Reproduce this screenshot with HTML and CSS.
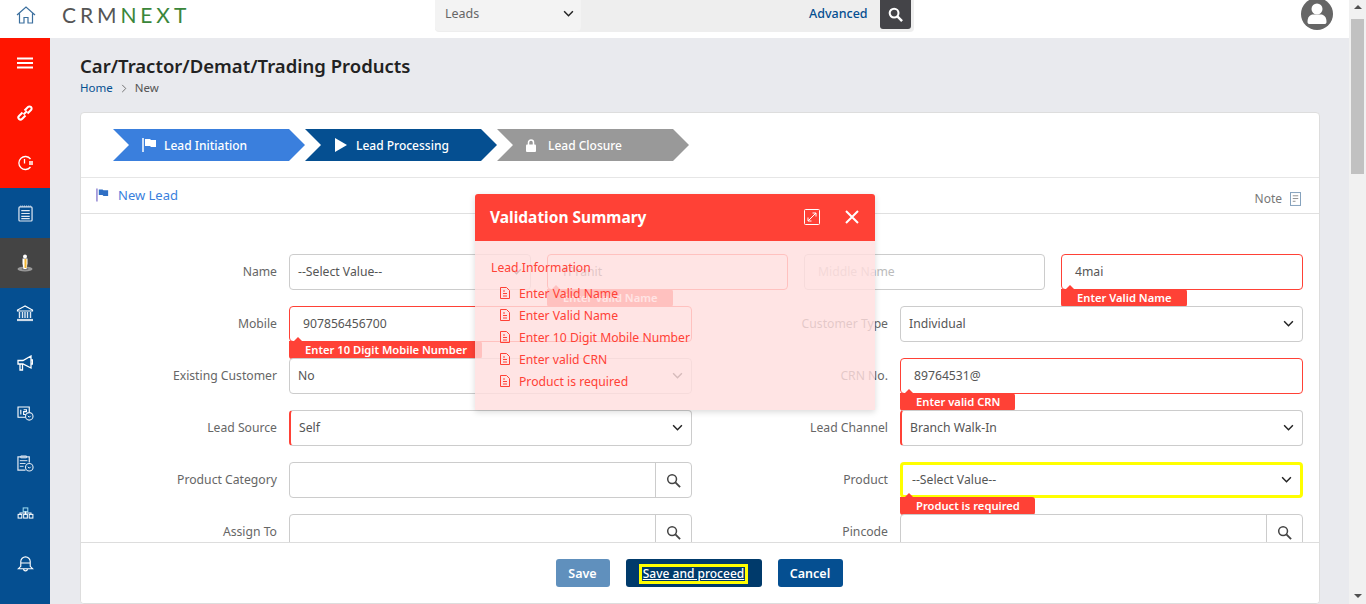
FILE: index.html
```html
<!DOCTYPE html>
<html lang="en">
<head>
<meta charset="utf-8">
<title>Car/Tractor/Demat/Trading Products</title>
<link rel="stylesheet" href="styles.css">
</head>
<body>
<div class="page">
  <div class="app">
    <header class="topbar">
      <svg class="home-icon" viewBox="0 0 20 18" width="20" height="18"><path d="M1 9 10 1l9 8M3.500 7.500V17h4.500v-5.500h4V17h4.500V7.500" fill="none" stroke="#3b6f9e" stroke-width="1.200"/></svg>
      <div class="logo"><span class="logo-a">CRM</span><span class="logo-b">NEXT</span></div>
      <div class="search">
        <div class="search-type"><span>Leads</span><svg class="chev" viewBox="0 0 12 8" width="11" height="7"><path d="M1 1.500 6 6.500l5-5" fill="none" stroke="#222" stroke-width="1.700"/></svg></div>
        <a class="advanced">Advanced</a>
        <div class="search-btn"><svg viewBox="0 0 16 16" width="15" height="15"><circle cx="6.500" cy="6.500" r="4.700" fill="none" stroke="#fff" stroke-width="2.200"/><path d="m10 10 5 5" stroke="#fff" stroke-width="2.600"/></svg></div>
      </div>
      <svg class="avatar" viewBox="0 0 32 32" width="32" height="32"><circle cx="16" cy="16" r="16" fill="#666"/><circle cx="16" cy="11" r="5.500" fill="#fff"/><path d="M6.500 24c0-5.500 3-7.500 5.500-7.500h8c2.500 0 5.500 2 5.500 7.500 0 1.500-1 2-2 2h-15c-1 0-2-.5-2-2z" fill="#fff"/></svg>
    </header>
    <div class="main">
      <nav class="sidebar">
        <div class="side-group red">
          <div class="side-item"><svg viewBox="0 0 16 12" width="16" height="12"><path d="M0 1.500h16M0 6h16M0 10.500h16" stroke="#fff" stroke-width="2"/></svg></div>
          <div class="side-item"><svg viewBox="0 0 18 18" width="18" height="18"><g fill="none" stroke="#fff" stroke-width="2"><path d="M7.500 10.500 11 7"/><path d="m6.500 8.500-3.500 3.500a2.100 2.100 0 0 0 3 3l3.500-3.500"/><path d="m8.500 6.500 3.500-3.500a2.100 2.100 0 0 1 3 3l-3.500 3.500"/></g></svg></div>
          <div class="side-item"><svg viewBox="0 0 18 18" width="18" height="18"><g fill="none" stroke="#fff" stroke-width="1.300"><path d="M14.500 13a6.500 6.500 0 1 1 0-8"/><path d="M8.500 5v4.500"/></g><rect x="13" y="7" width="4" height="4" fill="#ffc9c0"/></svg></div>
        </div>
        <div class="side-item"><svg viewBox="0 0 16 18" width="15" height="17"><rect x="1" y="2" width="14" height="15" rx="1" fill="none" stroke="#dfe8f2" stroke-width="1.300"/><path d="M3.500 6h9M3.500 9h9M3.500 12h9M3.500 14.500h9" stroke="#dfe8f2" stroke-width="1.300"/><path d="M2.500 1h11" stroke="#dfe8f2" stroke-dasharray="1 1"/></svg></div>
        <div class="side-item active"><svg viewBox="0 0 16 18" width="16" height="18"><ellipse cx="8" cy="15" rx="7.500" ry="2.500" fill="#999"/><ellipse cx="8" cy="15" rx="3.500" ry="1.200" fill="#777"/><circle cx="8" cy="2.500" r="2" fill="#fff"/><path d="M5.500 4.500h5v5l-1 5.500h-3l-1-5.500z" fill="#fff"/><rect x="7.500" y="5" width="2" height="9" fill="#f2b632"/></svg></div>
        <div class="side-item"><svg viewBox="0 0 18 17" width="18" height="17"><path d="M9 1 1.500 5v1h15V5z" fill="none" stroke="#fff" stroke-width="1.200"/><path d="M3.500 7v6M6.500 7v6M9 7v6M11.500 7v6M14.500 7v6" stroke="#dfe8f2" stroke-width="1.400"/><path d="M1 15h16" stroke="#cfdbe8" stroke-width="2.200"/></svg></div>
        <div class="side-item"><svg viewBox="0 0 16 16" width="16" height="16"><path d="M1 5.500h5L14 1v12L6 9H1zM3 9v6h2.500V9M14 5h1.500v4H14" fill="none" stroke="#fff" stroke-width="1.300"/></svg></div>
        <div class="side-item"><svg viewBox="0 0 18 16" width="17" height="15"><path d="M10 12H1V1h12v6" fill="none" stroke="#fff" stroke-width="1.200"/><path d="M4 4v5M7 4h3v2H7v3h3" fill="none" stroke="#fff" stroke-width="1.200"/><circle cx="13" cy="11" r="4" fill="#054f91" stroke="#dfe8f2" stroke-width="1.200"/><path d="m11.500 10.500 1.500 1.500 1.500-1.500" fill="none" stroke="#fff"/></svg></div>
        <div class="side-item"><svg viewBox="0 0 18 18" width="17" height="17"><path d="M9 16H1V2h12v6" fill="none" stroke="#dfe8f2" stroke-width="1.300"/><path d="M4 1h6v2H4zM3 6h8M3 9h6M3 12h4" fill="none" stroke="#dfe8f2"/><circle cx="13" cy="13" r="4" fill="#054f91" stroke="#dfe8f2" stroke-width="1.200"/><path d="m11.500 12.500 1.500 1.500 1.500-1.500" fill="none" stroke="#fff"/></svg></div>
        <div class="side-item"><svg viewBox="0 0 18 13" width="17" height="12"><g fill="none" stroke="#fff" stroke-width="1.100"><rect x="6.500" y="1" width="5" height="4" stroke="#9fdcf2"/><rect x="1" y="8" width="4" height="4"/><rect x="7" y="8" width="4" height="4"/><rect x="13" y="8" width="4" height="4"/><path d="M9 5v3M3 8V6.500h12V8"/></g></svg></div>
        <div class="side-item"><svg viewBox="0 0 18 18" width="17" height="17"><path d="M4 12V7a5 5 0 0 1 10 0v5l2.500 2.500h-15zM4.500 8.500h9M7 14.500c0 3 4 3 4 0" fill="none" stroke="#fff" stroke-width="1.200"/></svg></div>
      </nav>
      <main class="content">
        <h1 class="title">Car/Tractor/Demat/Trading Products</h1>
        <div class="crumbs"><a>Home</a><svg viewBox="0 0 6 10" width="6" height="9"><path d="m1 1 4 4-4 4" fill="none" stroke="#666"/></svg><span>New</span></div>
        <section class="panel">
          <div class="steps">
            <div class="step s1"><svg viewBox="0 0 15 14" width="15" height="14"><path d="M1 0v14" stroke="#fff" stroke-width="1.500"/><path d="M3 1h5l1 1h5v7H9L8 8H3z" fill="#fff"/></svg><span>Lead Initiation</span></div>
            <div class="step s2"><svg viewBox="0 0 12 14" width="12" height="14"><path d="M0 0l12 7-12 7z" fill="#fff"/></svg><span>Lead Processing</span></div>
            <div class="step s3"><svg viewBox="0 0 10 13" width="10" height="13"><path d="M2.500 6V3.500a2.500 2.500 0 0 1 5 0V6" fill="none" stroke="#fff" stroke-width="1.500"/><rect y="5.500" width="10" height="7.500" rx="1" fill="#fff"/></svg><span>Lead Closure</span></div>
          </div>
          <div class="panel-head">
            <div class="new-lead"><svg viewBox="0 0 15 14" width="14" height="14"><path d="M1 0v14" stroke="#8c7fd0" stroke-width="1.500"/><path d="M3 1h4l1 1h5v6H8L7 7H3z" fill="#2f6fc4"/></svg><span>New Lead</span></div>
            <div class="note"><span>Note</span><svg viewBox="0 0 12 15" width="11" height="14"><rect x=".5" y=".5" width="11" height="14" fill="none" stroke="#7b9ab8"/><path d="M3 4h6M3 7h6M3 10h3" stroke="#888"/></svg></div>
          </div>
          <div class="form-area">
            <form class="form-grid">
              <label class="lbl">Name</label>
              <div class="name-group">
                <div class="field sel"><span>--Select Value--</span><svg class="chev" viewBox="0 0 12 8" width="11" height="7"><path d="M1 1.500 6 6.500l5-5" fill="none" stroke="#222" stroke-width="1.700"/></svg></div>
                <div class="field err pad"><span>1Pranit</span><div class="tag">Enter Valid Name</div></div>
                <div class="field pad"><span class="ph">Middle Name</span></div>
                <div class="field err pad"><span>4mai</span><div class="tag">Enter Valid Name</div></div>
              </div>

              <label class="lbl">Mobile</label>
              <div class="field err pad"><span>907856456700</span><div class="tag wide">Enter 10 Digit Mobile Number</div></div>
              <label class="lbl">Customer Type</label>
              <div class="field sel"><span>Individual</span><svg class="chev" viewBox="0 0 12 8" width="11" height="7"><path d="M1 1.500 6 6.500l5-5" fill="none" stroke="#222" stroke-width="1.700"/></svg></div>

              <label class="lbl">Existing Customer</label>
              <div class="field sel"><span>No</span><svg class="chev" viewBox="0 0 12 8" width="11" height="7"><path d="M1 1.500 6 6.500l5-5" fill="none" stroke="#222" stroke-width="1.700"/></svg></div>
              <label class="lbl">CRN No.</label>
              <div class="field err pad"><span>89764531@</span><div class="tag">Enter valid CRN</div></div>

              <label class="lbl">Lead Source</label>
              <div class="field sel req"><span>Self</span><svg class="chev" viewBox="0 0 12 8" width="11" height="7"><path d="M1 1.500 6 6.500l5-5" fill="none" stroke="#222" stroke-width="1.700"/></svg></div>
              <label class="lbl">Lead Channel</label>
              <div class="field sel req"><span>Branch Walk-In</span><svg class="chev" viewBox="0 0 12 8" width="11" height="7"><path d="M1 1.500 6 6.500l5-5" fill="none" stroke="#222" stroke-width="1.700"/></svg></div>

              <label class="lbl">Product Category</label>
              <div class="field lookup"><div class="look-btn"><svg viewBox="0 0 16 16" width="15" height="15"><circle cx="6.500" cy="6.500" r="4.700" fill="none" stroke="#444" stroke-width="1.600"/><path d="m10 10 5 5" stroke="#444" stroke-width="2"/></svg></div></div>
              <label class="lbl">Product</label>
              <div class="field sel focus"><span>--Select Value--</span><svg class="chev" viewBox="0 0 12 8" width="11" height="7"><path d="M1 1.500 6 6.500l5-5" fill="none" stroke="#222" stroke-width="1.700"/></svg><div class="tag">Product is required</div></div>

              <label class="lbl">Assign To</label>
              <div class="field lookup"><div class="look-btn"><svg viewBox="0 0 16 16" width="15" height="15"><circle cx="6.500" cy="6.500" r="4.700" fill="none" stroke="#444" stroke-width="1.600"/><path d="m10 10 5 5" stroke="#444" stroke-width="2"/></svg></div></div>
              <label class="lbl">Pincode</label>
              <div class="field lookup"><div class="look-btn"><svg viewBox="0 0 16 16" width="15" height="15"><circle cx="6.500" cy="6.500" r="4.700" fill="none" stroke="#444" stroke-width="1.600"/><path d="m10 10 5 5" stroke="#444" stroke-width="2"/></svg></div></div>
            </form>
          </div>
          <footer class="panel-foot">
            <button class="btn save" type="button">Save</button>
            <button class="btn proceed" type="button"><span>Save and proceed</span></button>
            <button class="btn cancel" type="button">Cancel</button>
          </footer>
        </section>
      </main>
    </div>
  </div>
  <aside class="scrollbar">
    <div class="sb-arrow up"></div>
    <div class="sb-thumb"></div>
    <div class="sb-arrow down"></div>
  </aside>
  <div class="modal">
    <div class="modal-head">
      <h2>Validation Summary</h2>
      <svg class="m-expand" viewBox="0 0 16 16" width="16" height="16"><rect x=".5" y=".5" width="15" height="15" rx="1" fill="none" stroke="#fff"/><path d="M4 12 12 4M8.500 4H12v3.500M4 8.500V12h3.500" fill="none" stroke="#fff"/></svg>
      <svg class="m-close" viewBox="0 0 14 14" width="14" height="14"><path d="m1 1 12 12M13 1 1 13" stroke="#fff" stroke-width="2"/></svg>
    </div>
    <div class="modal-body">
      <div class="m-section">Lead Information</div>
      <ul class="m-list">
        <li><svg viewBox="0 0 10 12" width="10" height="12"><path d="M.5.5h6l3 3v8H.5z" fill="none" stroke="#ff4136"/><path d="M3 4h2M3 6.500h4M3 9h4" stroke="#ff4136"/></svg>Enter Valid Name</li>
        <li><svg viewBox="0 0 10 12" width="10" height="12"><path d="M.5.5h6l3 3v8H.5z" fill="none" stroke="#ff4136"/><path d="M3 4h2M3 6.500h4M3 9h4" stroke="#ff4136"/></svg>Enter Valid Name</li>
        <li><svg viewBox="0 0 10 12" width="10" height="12"><path d="M.5.5h6l3 3v8H.5z" fill="none" stroke="#ff4136"/><path d="M3 4h2M3 6.500h4M3 9h4" stroke="#ff4136"/></svg>Enter 10 Digit Mobile Number</li>
        <li><svg viewBox="0 0 10 12" width="10" height="12"><path d="M.5.5h6l3 3v8H.5z" fill="none" stroke="#ff4136"/><path d="M3 4h2M3 6.500h4M3 9h4" stroke="#ff4136"/></svg>Enter valid CRN</li>
        <li><svg viewBox="0 0 10 12" width="10" height="12"><path d="M.5.5h6l3 3v8H.5z" fill="none" stroke="#ff4136"/><path d="M3 4h2M3 6.500h4M3 9h4" stroke="#ff4136"/></svg>Product is required</li>
      </ul>
    </div>
  </div>
</div>
</body>
</html>
```
FILE: styles.css
```css
* { box-sizing: border-box; }
html, body { margin: 0; height: 100%; overflow: hidden; }
body { font-family: "Noto Sans", "Open Sans", sans-serif; font-size: 13px; color: #555; }
.page { position: relative; display: flex; width: 1366px; height: 604px; overflow: hidden; background: #e9eaee; }
.app { flex: 1; display: flex; flex-direction: column; min-width: 0; }

.topbar { height: 38px; flex: none; display: flex; align-items: flex-start; background: #fff; }
.home-icon { margin: 6px 0 0 16px; }
.logo { margin: 5px 0 0 26px; font-family: "Lato", sans-serif; font-weight: 400; font-size: 21px; letter-spacing: 3.900px; line-height: 20px; width: 373px; }
.logo-a { color: #555; }
.logo-b { color: #3a863a; }
.search { width: 479px; height: 32px; display: flex; background: #eee; border-radius: 0 0 4px 4px; }
.search-type { width: 146px; height: 31px; display: flex; align-items: center; justify-content: space-between; padding: 0 7px 4px 10px; background: #f3f3f3; border-radius: 0 0 4px 4px; color: #666; font-size: 12.500px; }
.advanced { margin: 5px 0 0 228px; color: #054f91; font-size: 12.500px; font-weight: 500; line-height: 18px; width: 71px; }
.search-btn { width: 31px; height: 29px; display: flex; align-items: center; justify-content: center; background: #444448; border-radius: 0 0 3px 3px; }
.avatar { margin: -2px 0 0 387px; }

.main { flex: 1; display: flex; min-height: 0; }
.sidebar { width: 50px; flex: none; background: #054f91; display: flex; flex-direction: column; }
.side-group.red { background: #ff1500; }
.side-item { height: 50px; display: flex; align-items: center; justify-content: center; }
.side-item.active { background: #444; }

.content { flex: 1; min-width: 0; padding: 15px 29px 0 30px; display: flex; flex-direction: column; }
.title { margin: 0; font-size: 18.500px; line-height: 26px; font-weight: 600; color: #222; }
.crumbs { margin-top: 1px; display: flex; align-items: center; gap: 8px; font-size: 11.500px; line-height: 16px; color: #555; }
.crumbs a { color: #054f91; }

.panel { margin-top: 16px; height: 492px; display: flex; flex-direction: column; background: #fff; border: 1px solid #ddd; border-radius: 4px; overflow: hidden; }
.steps { height: 65px; flex: none; display: flex; padding: 16px 0 0 32px; border-bottom: 1px solid #e6e6e6; }
.step { width: 192px; height: 32px; display: flex; align-items: center; gap: 7px; padding-left: 29px; color: #fff; font-size: 12px; font-weight: 500; clip-path: polygon(0 0, 176px 0, 100% 50%, 176px 100%, 0 100%, 16px 50%); }
.s1 { background: #3a7fdd; }
.s2 { background: #054f91; gap: 9px; padding-left: 30px; }
.s3 { background: #999; gap: 12px; }
.panel-head { height: 36px; flex: none; display: flex; align-items: center; justify-content: space-between; padding: 0 18px 0 15px; border-bottom: 1px solid #e0e0e0; }
.new-lead { display: flex; align-items: center; gap: 8px; margin-bottom: 2px; color: #3a7fdd; font-size: 13px; }
.note { display: flex; align-items: center; gap: 8px; margin-top: 6px; color: #777; font-size: 12px; }
.form-area { flex: 1; min-height: 0; overflow: hidden; padding: 40px 16px 0 0; }
.form-grid { display: grid; grid-template-columns: 196px 403px 184px 403px; column-gap: 12px; row-gap: 16px; grid-auto-rows: 36px; }
.lbl { align-self: center; margin-bottom: 2px; text-align: right; color: #666; font-size: 12.200px; }
.name-group { grid-column: 2 / 5; display: grid; grid-template-columns: 242px 241px 241px 242px; column-gap: 16px; }
.field { position: relative; display: flex; align-items: center; height: 36px; padding: 0 8px 2px; background: #fff; border: 1px solid #ccc; border-radius: 4px; color: #555; font-size: 12.200px; }
.field.sel { justify-content: space-between; }
.field.pad { padding-left: 13px; }
.field.err { border-color: #ff4136; }
.field.req { border-left: 2px solid #ff4136; }
.field.focus { border: 3px solid #ffff00; padding-left: 9px; }
.ph { color: #bbb; }
.field.lookup { padding: 0; justify-content: flex-end; }
.look-btn { width: 36px; height: 100%; display: flex; align-items: center; justify-content: center; border-left: 1px solid #ccc; }
.tag { position: absolute; left: -1px; top: 34px; height: 18px; padding: 0 15px 0 16px; background: #ff4136; color: #fff; font-size: 11.200px; font-weight: 600; line-height: 18px; border-radius: 0 3px 3px 3px; white-space: nowrap; }
.tag::before { content: ""; position: absolute; left: 5px; top: -4px; border: 4px solid transparent; border-top: 0; border-bottom-color: #ff4136; }
.focus .tag { left: -3px; top: 32px; }

.panel-foot { height: 61px; flex: none; display: flex; align-items: center; justify-content: center; gap: 16px; padding-right: 2px; border-top: 1px solid #ddd; background: #fff; }
.btn { height: 28px; border: 0; border-radius: 3px; color: #fff; font: 600 12.500px "Noto Sans", sans-serif; padding: 0; }
.save { width: 54px; background: #6090bd; }
.proceed { width: 136px; background: #003a6b; font-size: 12px; font-weight: 500; }
.proceed span { display: inline-block; padding: 0 1px; line-height: 14px; outline: 3px solid #ffff00; text-decoration: underline; }
.cancel { width: 65px; background: #054f91; }

.scrollbar { width: 17px; flex: none; display: flex; flex-direction: column; align-items: center; background: #f1f1f1; }
.sb-arrow { flex: none; width: 0; border: 4px solid transparent; }
.sb-arrow.up { margin-top: 5px; border-top: 0; border-bottom: 4px solid #505050; }
.sb-thumb { margin-top: 10px; width: 13px; height: 155px; background: #c1c1c1; }
.sb-arrow.down { margin-top: auto; margin-bottom: 6px; border-bottom: 0; border-top: 4px solid #505050; }

.modal { position: absolute; left: 475px; top: 194px; width: 400px; height: 216px; border-radius: 3px 3px 0 0; box-shadow: 0 2px 6px rgba(0,0,0,.15); }
.modal-head { height: 47px; display: flex; align-items: center; padding: 0 15px 2px; background: #ff4136; color: #fff; border-radius: 3px 3px 0 0; }
.modal-head h2 { flex: 1; margin: 0; font-size: 15.500px; font-weight: 700; }
.m-close { margin-left: 25px; margin-right: 1px; }
.modal-body { height: 169px; padding: 17px 16px 0; background: rgba(255, 222, 222, .82); color: #ff4136; font-size: 12.200px; }
.m-section { line-height: 20px; }
.m-list { list-style: none; margin: 4px 0 0; padding: 0 0 0 9px; }
.m-list li { height: 22px; display: flex; align-items: center; gap: 9px; }
```
